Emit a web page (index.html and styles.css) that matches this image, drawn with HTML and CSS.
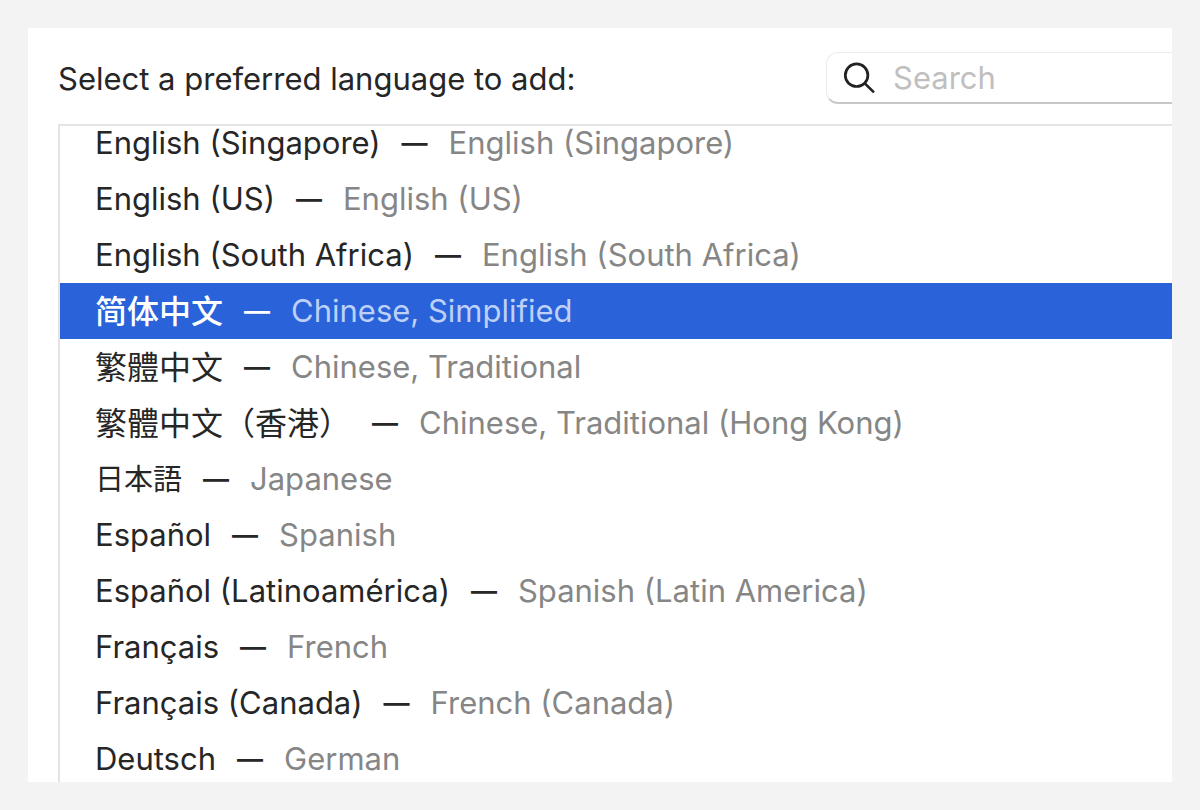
FILE: index.html
```html
<!DOCTYPE html>
<html lang="en">
<head>
    <meta charset="UTF-8">
    <meta name="viewport" content="width=device-width, initial-scale=1.0">
    <title>Preferred Languages</title>
    <link rel="stylesheet" href="styles.css">
</head>
<body>
    <main class="panel">
        <header class="toolbar">
            <h1 id="listTitle">Select a preferred language to add:</h1>
            <label class="search">
                <svg class="search-icon" viewBox="0 0 32 32" aria-hidden="true">
                    <circle cx="13.6" cy="13.2" r="11.3"/>
                    <path d="M21.8 21.4 L30.2 29.6"/>
                </svg>
                <input type="search" placeholder="Search" aria-label="Search">
            </label>
        </header>

        <!-- Language list, scrolled a little past the first row -->
        <div class="list-frame">
            <ul class="languages" role="listbox" aria-labelledby="listTitle">
                <li role="option"><span class="name">English (Singapore)</span><span class="dash">—</span><span class="local">English (Singapore)</span></li>
                <li role="option"><span class="name">English (US)</span><span class="dash">—</span><span class="local">English (US)</span></li>
                <li role="option"><span class="name">English (South Africa)</span><span class="dash">—</span><span class="local">English (South Africa)</span></li>
                <li role="option" class="selected" aria-selected="true"><span class="name chinese" lang="zh-Hans">简体中文</span><span class="dash">—</span><span class="local">Chinese, Simplified</span></li>
                <li role="option"><span class="name chinese" lang="zh-Hant">繁體中文</span><span class="dash">—</span><span class="local">Chinese, Traditional</span></li>
                <li role="option"><span class="name chinese" lang="zh-Hans">繁體中文（香港）</span><span class="dash">—</span><span class="local">Chinese, Traditional (Hong Kong)</span></li>
                <li role="option"><span class="name japanese" lang="ja">日本語</span><span class="dash">—</span><span class="local">Japanese</span></li>
                <li role="option"><span class="name" lang="es">Español</span><span class="dash">—</span><span class="local">Spanish</span></li>
                <li role="option"><span class="name" lang="es">Español (Latinoamérica)</span><span class="dash">—</span><span class="local">Spanish (Latin America)</span></li>
                <li role="option"><span class="name" lang="fr">Français</span><span class="dash">—</span><span class="local">French</span></li>
                <li role="option"><span class="name" lang="fr">Français (Canada)</span><span class="dash">—</span><span class="local">French (Canada)</span></li>
                <li role="option"><span class="name" lang="de">Deutsch</span><span class="dash">—</span><span class="local">German</span></li>
            </ul>
        </div>
    </main>
</body>
</html>
```
FILE: styles.css
```css
* {
    margin: 0;
    padding: 0;
    box-sizing: border-box;
}

body {
    height: 100vh;
    padding: 28px;
    background-color: #f3f3f3;
    color: #262626;
    font-family: Inter, "Noto Sans CJK SC", sans-serif;
    font-size: 31px;
}

.panel {
    height: 100%;
    padding: 24px 0 0 30px;
    background-color: #fff;
    display: flex;
    flex-direction: column;
    gap: 20px;
    overflow: hidden;
}

.toolbar {
    display: flex;
    justify-content: space-between;
    align-items: center;
}

h1 {
    font-size: 31px;
    font-weight: 420;
    white-space: nowrap;
}

.search {
    width: 346px;
    height: 52px;
    padding-left: 16px;
    border: 1px solid #ebebeb;
    border-right: none;
    border-bottom: 2px solid #c8c8c8;
    border-radius: 12px 0 0 12px;
    display: flex;
    align-items: center;
    gap: 18px;
}

.search-icon {
    width: 32px;
    height: 32px;
    flex-shrink: 0;
    fill: none;
    stroke: #222;
    stroke-width: 2.7;
    stroke-linecap: round;
}

.search input {
    width: 100%;
    min-width: 0;
    border: none;
    outline: none;
    background: none;
    font: inherit;
}

.search input::placeholder {
    color: #bfbfbf;
}

.list-frame {
    flex: 1;
    min-height: 0;
    border-top: 2px solid #e4e4e4;
    border-left: 2px solid #e4e4e4;
    overflow: hidden;
}

.languages {
    list-style: none;
    margin-top: -11px;
}

.languages li {
    height: 56px;
    padding-left: 35px;
    display: flex;
    align-items: center;
    gap: 21px;
    line-height: 40px;
    white-space: nowrap;
}

.name {
    font-weight: 420;
}

.dash {
    font-size: 26px;
    font-weight: 600;
}

.local {
    color: #868686;
}

.chinese {
    padding-bottom: 4px;
    font-family: "Noto Sans CJK SC", sans-serif;
    font-size: 32px;
    font-weight: 400;
}

.japanese {
    padding-bottom: 4px;
    font-family: "Noto Sans CJK JP", sans-serif;
    font-size: 29px;
    font-weight: 400;
}

.selected {
    background-color: #2962d9;
    color: #fff;
}

.selected .name {
    font-weight: 500;
}

.selected .local {
    color: #bdd0f7;
}
```
